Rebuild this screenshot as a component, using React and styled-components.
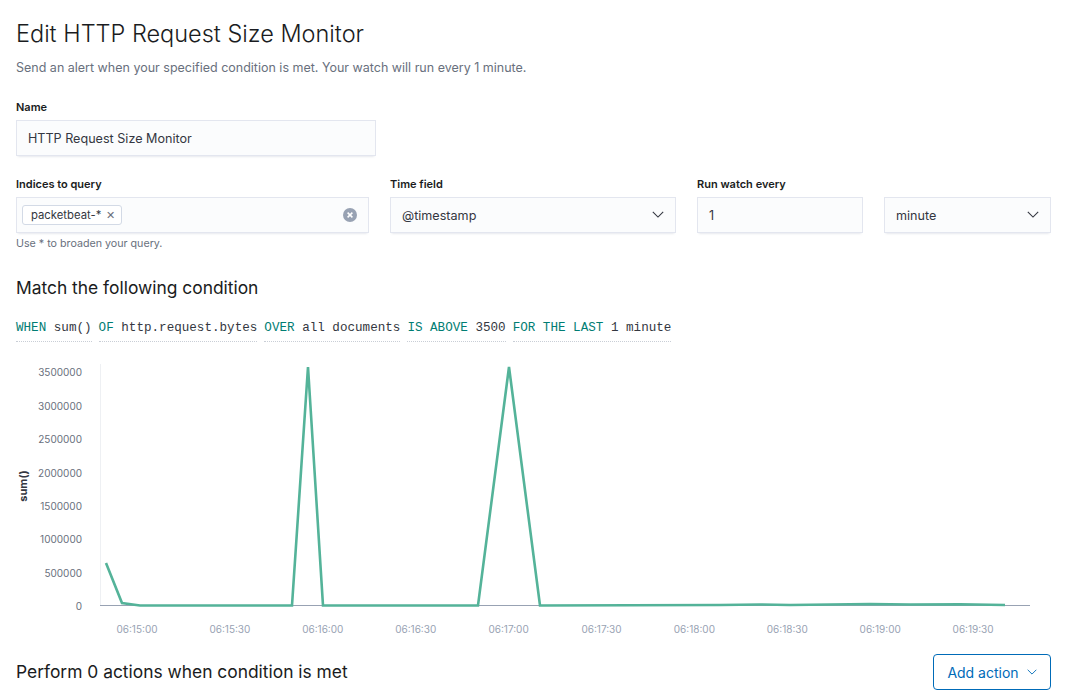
import React from 'react'
import styled, { createGlobalStyle } from 'styled-components'

const GlobalStyle = createGlobalStyle`
  body {
    margin: 0;
    background: #fff;
    font-family: Inter, "Noto Sans", sans-serif;
    color: #343741;
  }
`

const Page = styled.div`
  padding: 16px 16px 0 16px;
`

const Title = styled.h1`
  margin: 0;
  font-size: 23.5px;
  line-height: 36px;
  font-weight: 300;
  color: #1a1c21;
`

const Subtitle = styled.p`
  margin: 7px 0 0;
  font-size: 12.5px;
  line-height: 18px;
  color: #69707d;
`

const Field = styled.div`
  display: flex;
  flex-direction: column;
  margin-top: ${(p) => p.top || 0}px;
`

const Label = styled.label`
  font-size: 11px;
  line-height: 18px;
  font-weight: 600;
  color: #1a1c21;
  margin-bottom: 4px;
  min-height: 18px;
`

const Control = styled.div`
  box-sizing: border-box;
  height: 36px;
  width: ${(p) => (p.w ? p.w + 'px' : '100%')};
  display: flex;
  align-items: center;
  gap: 8px;
  padding: 0 12px;
  background: #fbfcfd;
  font-size: 12.6px;
  color: #343741;
  box-shadow: 0 1px 1px -1px rgba(152, 162, 179, 0.2),
    0 3px 2px -2px rgba(152, 162, 179, 0.2),
    inset 0 0 0 1px rgba(15, 39, 118, 0.1);
`

const ControlText = styled.span`
  flex: 1;
`

const Row = styled.div`
  display: grid;
  grid-template-columns: 353px 286px 166px 167px;
  column-gap: 21px;
  margin-top: 19px;
`

const Help = styled.div`
  margin-top: 4px;
  font-size: 10.7px;
  line-height: 14px;
  color: #69707d;
`

const Pill = styled.span`
  display: inline-flex;
  align-items: center;
  gap: 5px;
  height: 20px;
  box-sizing: border-box;
  padding: 0 6px 0 8px;
  border: 1px solid #d3dae6;
  border-radius: 3px;
  background: #fff;
  font-size: 11.3px;
  color: #343741;
  margin-left: -6px;
`

const PillX = styled.span`
  font-size: 11px;
  color: #69707d;
`

const Heading = styled.h2`
  margin: ${(p) => p.top || 0}px 0 0;
  font-size: 17.4px;
  line-height: 24px;
  font-weight: 400;
  color: #1a1c21;
`

const Expression = styled.div`
  display: flex;
  gap: 7px;
  margin-top: 18px;
  font-family: "Liberation Mono", "DejaVu Sans Mono", monospace;
  font-size: 12.6px;
  line-height: 20px;
`

const ExprItem = styled.span`
  border-bottom: 1px dotted #c9ced6;
  padding-bottom: 3px;
  white-space: pre;
`

const Kw = styled.span`
  color: #017d73;
`

const Val = styled.span`
  color: #343741;
`

const ChartWrap = styled.div`
  margin: 12px -16px 0;
  height: 285px;
`

const Footer = styled.div`
  display: flex;
  align-items: center;
  justify-content: space-between;
  margin-top: 15px;
  padding-right: 1px;
`

const Button = styled.button`
  box-sizing: border-box;
  height: 36px;
  width: 118px;
  display: inline-flex;
  align-items: center;
  justify-content: center;
  gap: 8px;
  border: 1px solid #006bb8;
  border-radius: 4px;
  background: #fff;
  color: #006bb8;
  font-family: Inter, "Noto Sans", sans-serif;
  font-size: 14px;
  padding: 0 12px;
`

const Chevron = ({ size = 12, color = '#343741' }) => (
  <svg width={size} height={size * 0.6} viewBox="0 0 12 7" fill="none">
    <path d="M0.8 0.8 L6 6 L11.2 0.8" stroke={color} strokeWidth="1.1" />
  </svg>
)

const ClearIcon = () => (
  <svg width="14" height="14" viewBox="0 0 14 14">
    <circle cx="7" cy="7" r="7" fill="#98a2b3" />
    <path d="M4.6 4.6 L9.4 9.4 M9.4 4.6 L4.6 9.4" stroke="#fff" strokeWidth="1.5" />
  </svg>
)

const yTicks = [0, 500000, 1000000, 1500000, 2000000, 2500000, 3000000, 3500000]
const xTicks = ['06:15:00', '06:15:30', '06:16:00', '06:16:30', '06:17:00', '06:17:30', '06:18:00', '06:18:30', '06:19:00', '06:19:30']

// page coordinates, the svg viewBox is aligned to the page
const points = [
  [106, 564], [122, 604], [140, 606.5], [292, 606.5], [308, 368], [323, 606.5],
  [478, 606.5], [509, 368], [540, 606.5], [720, 606], [760, 605.5], [790, 606],
  [830, 605.5], [870, 605], [910, 605.5], [960, 605.2], [1005, 606],
]

const Chart = () => {
  const yFor = (v) => 606.5 - (v / 500000) * 33.36
  return (
    <svg width="1068" height="285" viewBox="0 355 1068 285">
      <line x1="100.5" y1="365" x2="100.5" y2="606" stroke="#eef0f3" />
      {yTicks.map((v) => (
        <text
          key={v}
          x="82"
          y={yFor(v) + 4.5}
          textAnchor="end"
          fontSize="10"
          fill="#69707d"
          fontFamily="Inter, sans-serif"
        >
          {v}
        </text>
      ))}
      <text
        x="0"
        y="0"
        transform="translate(27 487) rotate(-90)"
        textAnchor="middle"
        fontSize="11"
        fontWeight="700"
        fill="#343741"
        fontFamily="Inter, sans-serif"
      >
        sum()
      </text>
      <line x1="100" y1="606.5" x2="1030" y2="606.5" stroke="#98a2b3" />
      {xTicks.map((t, i) => (
        <text
          key={t}
          x={137 + i * 92.9}
          y="633.5"
          textAnchor="middle"
          fontSize="10"
          fill="#98a2b3"
          fontFamily="Inter, sans-serif"
        >
          {t}
        </text>
      ))}
      <polyline
        points={points.map((p) => p.join(',')).join(' ')}
        fill="none"
        stroke="#54b399"
        strokeWidth="2.6"
        strokeLinejoin="miter"
      />
    </svg>
  )
}

export default function App() {
  return (
    <Page>
      <GlobalStyle />
      <Title>Edit HTTP Request Size Monitor</Title>
      <Subtitle>
        Send an alert when your specified condition is met. Your watch will run every 1 minute.
      </Subtitle>

      <Field top={21}>
        <Label>Name</Label>
        <Control w={360}>
          <ControlText>HTTP Request Size Monitor</ControlText>
        </Control>
      </Field>

      <Row>
        <Field>
          <Label>Indices to query</Label>
          <Control>
            <ControlText>
              <Pill>
                packetbeat-* <PillX>✕</PillX>
              </Pill>
            </ControlText>
            <ClearIcon />
          </Control>
          <Help>Use * to broaden your query.</Help>
        </Field>
        <Field>
          <Label>Time field</Label>
          <Control>
            <ControlText>@timestamp</ControlText>
            <Chevron />
          </Control>
        </Field>
        <Field>
          <Label>Run watch every</Label>
          <Control>
            <ControlText>1</ControlText>
          </Control>
        </Field>
        <Field>
          <Label />
          <Control>
            <ControlText>minute</ControlText>
            <Chevron />
          </Control>
        </Field>
      </Row>

      <Heading top={25}>Match the following condition</Heading>
      <Expression>
        <ExprItem>
          <Kw>WHEN</Kw> <Val>sum()</Val>
        </ExprItem>
        <ExprItem>
          <Kw>OF</Kw> <Val>http.request.bytes</Val>
        </ExprItem>
        <ExprItem>
          <Kw>OVER</Kw> <Val>all documents</Val>
        </ExprItem>
        <ExprItem>
          <Kw>IS ABOVE</Kw> <Val>3500</Val>
        </ExprItem>
        <ExprItem>
          <Kw>FOR THE LAST</Kw> <Val>1 minute</Val>
        </ExprItem>
      </Expression>

      <ChartWrap>
        <Chart />
      </ChartWrap>

      <Footer>
        <Heading>Perform 0 actions when condition is met</Heading>
        <Button>
          Add action <Chevron size={10} color="#006bb8" />
        </Button>
      </Footer>
    </Page>
  )
}
